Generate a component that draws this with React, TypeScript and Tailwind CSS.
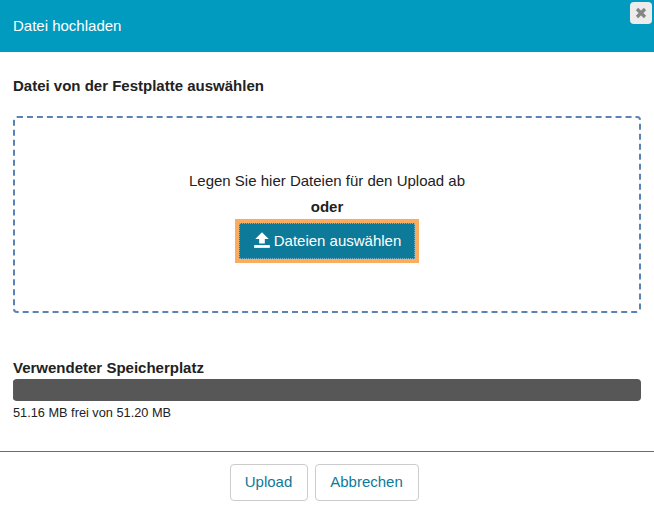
export default function App() {
  return (
    <div className="flex h-[505px] w-[654px] flex-col overflow-hidden bg-white font-['Liberation_Sans',Arial,sans-serif] text-[15px] text-[#222]">
      <header className="relative flex h-[52px] shrink-0 items-center bg-[#009bbf] px-[13px]">
        <h1 className="text-[15px] text-white">Datei hochladen</h1>
        <button className="absolute top-[2px] right-[2px] flex h-[22px] w-[22px] items-center justify-center rounded-[4px] bg-[#ececec]">
          <svg width="12" height="12" viewBox="0 0 12 12">
            <path d="M2 2 L10 10 M10 2 L2 10" stroke="#858585" strokeWidth="3.2" />
          </svg>
        </button>
      </header>

      <main className="flex flex-1 flex-col px-[13px] pt-[26px]">
        <h2 className="text-[15px] leading-[16px] font-bold">Datei von der Festplatte auswählen</h2>

        <div className="mt-[22px] flex h-[197px] flex-col items-center justify-center rounded-[4px] border-2 border-dashed border-[#5b82b5]">
          <p className="text-[15px] leading-[20px]">Legen Sie hier Dateien für den Upload ab</p>
          <p className="mt-[6px] text-[15px] leading-[20px] font-bold">oder</p>
          <button className="mt-[6px] flex h-[36px] w-[176px] items-center justify-center gap-[3px] border border-dotted border-[#ffffff70] bg-[#0e7a99] pt-[1px] text-[15px] text-white outline-[4px] outline-[#fbac5f]">
            <svg width="18" height="18" viewBox="0 0 16 16" fill="white" className="-mt-[2px]">
              <path d="M8 1 L14 7 H10.5 V11 H5.5 V7 H2 Z" />
              <rect x="1" y="12.5" width="14" height="2.5" />
            </svg>
            Dateien auswählen
          </button>
        </div>

        <h2 className="mt-[47px] text-[15px] leading-[16px] font-bold">Verwendeter Speicherplatz</h2>
        <div className="mt-[3px] h-[22px] overflow-hidden rounded-[4px] bg-[#575757]">
          <div className="h-full w-[1px] bg-[#0e7a99]" />
        </div>
        <p className="mt-[5px] text-[12.75px] leading-[14px]">51.16 MB frei von 51.20 MB</p>
      </main>

      <footer className="flex h-[54px] shrink-0 items-start justify-center gap-[7px] border-t border-[#0a8fb0] pt-[12px] pr-[6px]">
        <button className="h-[37px] w-[78px] rounded-[4px] border border-[#ccc] bg-white text-[15px] text-[#0e7a99]">Upload</button>
        <button className="h-[37px] w-[104px] rounded-[4px] border border-[#ccc] bg-white text-[15px] text-[#0e7a99]">Abbrechen</button>
      </footer>
    </div>
  );
}
